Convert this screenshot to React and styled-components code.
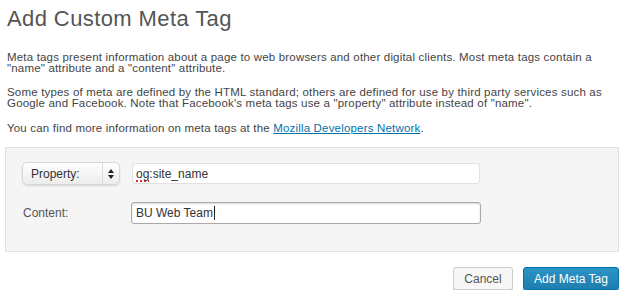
import React from "react";
import styled, { createGlobalStyle } from "styled-components";

const Global = createGlobalStyle`
  html, body { margin: 0; padding: 0; background: #fff; }
  body { font-family: "Liberation Sans", Arial, sans-serif; }
`;

const Page = styled.div`
  width: 629px;
  box-sizing: border-box;
  padding: 0 10px 0 5px;
`;

const Title = styled.h1`
  margin: 0;
  padding: 6px 0 0 2px;
  font-size: 22px;
  font-weight: 300;
  line-height: 26px;
  color: #555;
  letter-spacing: 0.4px;
`;

const Text = styled.p`
  margin: ${p => p.$top}px 0 0 0;
  padding-left: 2px;
  font-size: 11.5px;
  line-height: 11px;
  color: #444;
  letter-spacing: 0.18px;
  white-space: nowrap;
`;

const Link = styled.a`
  color: #0073aa;
  text-decoration: underline;
`;

const Panel = styled.div`
  margin-top: 13px;
  background: #f5f5f5;
  border: 1px solid #e2e2e2;
  padding: 14px 0 27px 16px;
  display: flex;
  flex-direction: column;
  gap: 17px;
`;

const Row = styled.div`
  display: flex;
  align-items: center;
`;

const Select = styled.div`
  box-sizing: border-box;
  width: 98px;
  height: 23px;
  margin-right: 12px;
  display: flex;
  border: 1px solid #d6d6d6;
  border-radius: 5px;
  background: linear-gradient(#ffffff, #ececec);
  box-shadow: 0 1px 2px rgba(0,0,0,0.12);
  font-size: 12px;
  color: #333;
`;

const SelectLabel = styled.div`
  flex: 1;
  display: flex;
  align-items: center;
  padding-left: 8px;
  border-right: 1px solid #dcdcdc;
`;

const SelectArrows = styled.div`
  width: 16px;
  display: flex;
  align-items: center;
  justify-content: center;
`;

const Field = styled.div`
  box-sizing: border-box;
  width: ${p => p.$w}px;
  height: ${p => p.$h}px;
  display: flex;
  align-items: center;
  padding-left: ${p => (p.$focus ? 4 : 3)}px;
  background: #fff;
  border: 1px solid ${p => (p.$focus ? "#a9a9a9" : "#e0e0e0")};
  border-radius: 3px;
  box-shadow: ${p => (p.$focus ? "inset 0 1px 2px rgba(0,0,0,0.15)" : "none")};
  font-size: 12px;
  color: #333;
  white-space: pre;
`;

const Misspelled = styled.span`
  text-decoration: underline dotted #e03030;
  text-decoration-thickness: 2px;
  text-underline-offset: 3px;
`;

const Caret = styled.span`
  display: inline-block;
  width: 0;
  height: 14px;
  border-left: 1px solid #222;
  margin-left: 1px;
`;

const Label = styled.div`
  width: 108px;
  padding-left: 1px;
  font-size: 12px;
  color: #555;
`;

const Actions = styled.div`
  display: flex;
  justify-content: flex-end;
  gap: 10px;
  margin-top: 15px;
`;

const Button = styled.button`
  box-sizing: border-box;
  height: 23px;
  width: ${p => p.$w}px;
  padding: 0;
  border-radius: 3px;
  font-family: "Liberation Sans", Arial, sans-serif;
  font-size: 12px;
  cursor: pointer;
  border: 1px solid ${p => (p.$primary ? "#0073aa" : "#cccccc")};
  color: ${p => (p.$primary ? "#fff" : "#555")};
  background: ${p => (p.$primary ? "linear-gradient(#2b93c6, #1f7fae)" : "#f7f7f7")};
  box-shadow: ${p => (p.$primary ? "0 1px 0 #006799" : "0 1px 0 #ccc")};
`;

export default function App() {
  return (
    <Page>
      <Global />
      <Title>Add Custom Meta Tag</Title>
      <Text $top={20}>
        Meta tags present information about a page to web browsers and other digital clients. Most meta tags contain a
        <br />
        "name" attribute and a "content" attribute.
      </Text>
      <Text $top={13}>
        Some types of meta are defined by the HTML standard; others are defined for use by third party services such as
        <br />
        Google and Facebook. Note that Facebook's meta tags use a "property" attribute instead of "name".
      </Text>
      <Text $top={14}>
        You can find more information on meta tags at the <Link href="#">Mozilla Developers Network</Link>.
      </Text>
      <Panel>
        <Row>
          <Select>
            <SelectLabel>Property:</SelectLabel>
            <SelectArrows>
              <svg width="6" height="10" viewBox="0 0 6 10">
                <path d="M3 0 L6 4 L0 4 Z M0 6 L6 6 L3 10 Z" fill="#222" />
              </svg>
            </SelectArrows>
          </Select>
          <Field $w={348} $h={21}>
            <Misspelled>og</Misspelled>:site_name
          </Field>
        </Row>
        <Row>
          <Label>Content:</Label>
          <Field $w={350} $h={22} $focus>
            BU Web Team<Caret />
          </Field>
        </Row>
      </Panel>
      <Actions>
        <Button $w={60}>Cancel</Button>
        <Button $w={96} $primary>Add Meta Tag</Button>
      </Actions>
    </Page>
  );
}
